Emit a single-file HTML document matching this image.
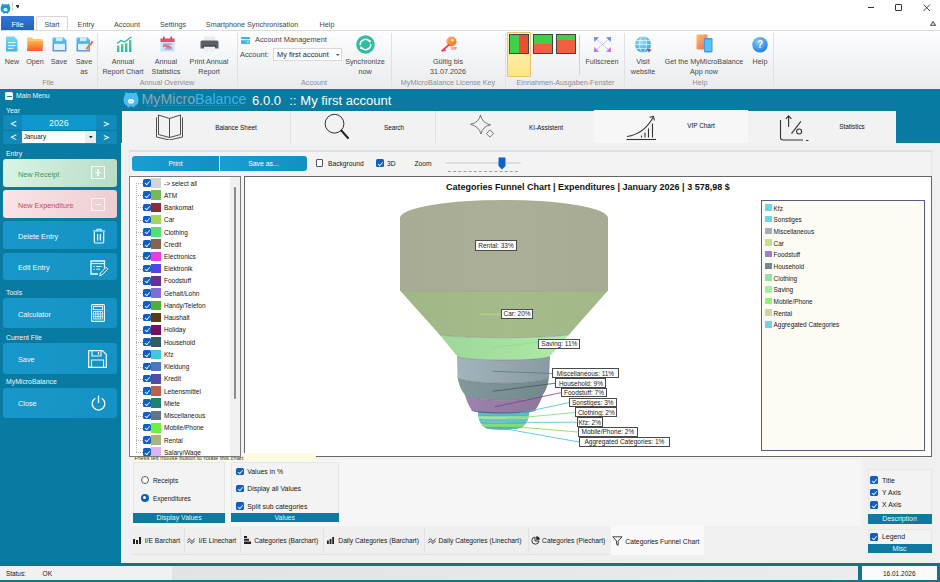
<!DOCTYPE html>
<html><head><meta charset="utf-8">
<style>
*{box-sizing:border-box}
html,body{margin:0;padding:0}
body{width:940px;height:582px;overflow:hidden;position:relative;background:#fff;font-family:"Liberation Sans",sans-serif;color:#222}
.a{position:absolute}
.t{position:absolute;white-space:nowrap;line-height:10px;height:10px}
.c{text-align:center}
.rb{font-size:7.2px;color:#474747}
.gl{font-size:7.2px;color:#8d8d8d}
.sl{color:#eef6fa}
.sw{color:#f2f9fc}
.btn{left:3px;width:114px;border-radius:3px}
.bb{background:linear-gradient(100deg,#1898ca,#1592c4)}
.tb{font-size:6.4px;color:#111}
.tx{color:#161616}
.chk{width:7.6px;height:7.6px;border-radius:1.5px;background:#0f5ec4}
.chk::after{content:"";position:absolute;left:2.6px;top:1.4px;width:1.9px;height:3.6px;border-right:0.85px solid #e8f0ff;border-bottom:0.85px solid #e8f0ff;transform:rotate(40deg)}
.sep{position:absolute;width:1px;background:#dfe2e5}
</style></head><body>
<!-- ===== TITLE BAR ===== -->
<div class="a" style="left:0;top:0;width:940px;height:31px;background:#fff"></div>
<!-- app icon -->
<svg class="a" style="left:0;top:3px" width="11" height="11" viewBox="0 0 16 17">
<path d="M2.2 3.2 Q1.5 0.8 3.5 1.2 L5 2.2 Q8 1.5 11 2.2 L12.5 1.2 Q14.5 0.8 13.8 3.2 Q15.8 6 15.5 9.5 Q15 14 11.5 15 L11.5 16.5 L9.8 16.5 L9.8 15.4 Q8 15.6 6.2 15.4 L6.2 16.5 L4.5 16.5 L4.5 15 Q1 14 0.5 9.5 Q0.2 6 2.2 3.2Z" fill="#1f98cf"/>
<ellipse cx="8" cy="10.3" rx="3.2" ry="2.5" fill="#fff"/>
<circle cx="7" cy="10.3" r="0.7" fill="#1f98cf"/><circle cx="9" cy="10.3" r="0.7" fill="#1f98cf"/>
</svg>
<div class="a" style="left:12px;top:2px;width:1px;height:9px;background:#ccc"></div>
<div class="a" style="left:16px;top:5px;width:3px;height:1px;background:#333"></div>
<svg class="a" style="left:16px;top:6px" width="4" height="4"><path d="M0 0 L3.5 0 L1.75 2.5Z" fill="#333"/></svg>
<!-- window controls -->
<div class="a" style="left:868px;top:7px;width:6px;height:1px;background:#333"></div>
<div class="a" style="left:895px;top:4px;width:7px;height:7px;border:1px solid #333;border-radius:1px"></div>
<svg class="a" style="left:923px;top:4px" width="8" height="8"><path d="M0.5 0.5 L7 7 M7 0.5 L0.5 7" stroke="#333" stroke-width="0.9"/></svg>
<svg class="a" style="left:929px;top:20px" width="9" height="7" viewBox="0 0 9 7"><path d="M4 1.6 L1.6 5.3 L6.6 5.3 Z" fill="none" stroke="#6a6a6a" stroke-width="1.15" stroke-linejoin="round"/></svg>
<!-- tabs -->
<div class="a" style="left:1px;top:16px;width:33px;height:15px;background:linear-gradient(#3377d6,#2160c0);border-radius:1px"></div>
<div class="t c" style="left:1px;top:20px;width:33px;font-size:7.6px;color:#fff">File</div>
<div class="a" style="left:36px;top:16px;width:32px;height:16px;background:#fdfdfd;border:1px solid #d6d6d6;border-bottom:none;border-radius:2px 2px 0 0"></div>
<div class="t c rb" style="left:36px;top:20px;width:32px">Start</div>
<div class="t c rb" style="left:66px;top:20px;width:40px">Entry</div>
<div class="t c rb" style="left:102px;top:20px;width:50px">Account</div>
<div class="t c rb" style="left:148px;top:20px;width:50px">Settings</div>
<div class="t c rb" style="left:202px;top:20px;width:100px">Smartphone Synchronisation</div>
<div class="t c rb" style="left:307px;top:20px;width:40px">Help</div>
<!-- ===== RIBBON ===== -->
<div class="a" style="left:0;top:30px;width:940px;height:1px;background:#dadcdf"></div>
<div class="a" style="left:0;top:31px;width:940px;height:58px;background:linear-gradient(#fdfdfe,#e9ebee)"></div>
<div class="sep" style="left:97px;top:33px;height:54px"></div>
<div class="sep" style="left:237px;top:33px;height:54px"></div>
<div class="sep" style="left:391px;top:33px;height:54px"></div>
<div class="sep" style="left:505px;top:33px;height:54px"></div>
<div class="sep" style="left:624px;top:33px;height:54px"></div>
<div class="sep" style="left:773px;top:33px;height:54px"></div>
<div id="ribbon"></div>
<!-- File group -->
<svg class="a" style="left:5px;top:36px" width="14" height="16" viewBox="0 0 14 16">
<defs><linearGradient id="gNew" x1="0" y1="0" x2="0" y2="1"><stop offset="0" stop-color="#7dd6f6"/><stop offset="1" stop-color="#3db5ea"/></linearGradient></defs>
<path d="M1 0.5 L9 0.5 L12.5 4 L12.5 15.5 L1 15.5Z" fill="url(#gNew)"/>
<rect x="3" y="6" width="7.5" height="1.1" fill="#e6f8ff"/>
<rect x="3" y="9" width="7.5" height="1.1" fill="#e6f8ff"/>
<rect x="3" y="11.8" width="5.5" height="1.1" fill="#e6f8ff"/>
</svg>
<svg class="a" style="left:26px;top:37px" width="18" height="15" viewBox="0 0 18 15">
<defs><linearGradient id="gOpen" x1="0" y1="0" x2="0" y2="1"><stop offset="0" stop-color="#ffb24a"/><stop offset="1" stop-color="#fb5a24"/></linearGradient></defs>
<path d="M1 1.5 Q1 0.5 2 0.5 L6 0.5 L7.5 2 L15.5 2 Q16.5 2 16.5 3 L16.5 14 L1 14Z" fill="#ffc873"/>
<path d="M2.2 4 L17 4 L16.5 14 L1 14Z" fill="url(#gOpen)"/>
</svg>
<svg class="a" style="left:52px;top:37px" width="15" height="15" viewBox="0 0 15 15">
<defs><linearGradient id="gSave" x1="0" y1="0" x2="0" y2="1"><stop offset="0" stop-color="#52c6ee"/><stop offset="1" stop-color="#5b8de6"/></linearGradient></defs>
<path d="M0.5 1 Q0.5 0.5 1 0.5 L11.5 0.5 L14.5 3.5 L14.5 14 Q14.5 14.5 14 14.5 L1 14.5 Q0.5 14.5 0.5 14Z" fill="url(#gSave)"/>
<rect x="4" y="0.5" width="6.5" height="3.6" fill="#c6eefc"/>
<rect x="2" y="6.8" width="11" height="6.3" fill="#d9f3fd"/>
</svg>
<svg class="a" style="left:76px;top:37px" width="17" height="15" viewBox="0 0 17 15">
<path d="M0.5 1 Q0.5 0.5 1 0.5 L11.5 0.5 L14 3 L14 14 Q14 14.5 13.5 14.5 L1 14.5 Q0.5 14.5 0.5 14Z" fill="url(#gSave)"/>
<rect x="4" y="0.5" width="6.5" height="3.6" fill="#c6eefc"/>
<rect x="2" y="6.8" width="10.5" height="6.3" fill="#d9f3fd"/>
<path d="M9.5 11.5 L14.5 5.5 L16 7 L11 13Z" fill="#f47a3a"/>
<path d="M14.5 5.5 L15.5 4.3 Q16.2 3.8 16.8 4.5 Q17.2 5.2 16.8 5.7 L16 7Z" fill="#e84a6a"/>
</svg>
<div class="t c rb" style="left:-8px;top:57px;width:40px">New</div>
<div class="t c rb" style="left:15px;top:57px;width:40px">Open</div>
<div class="t c rb" style="left:39px;top:57px;width:40px">Save</div>
<div class="t c rb" style="left:64px;top:57px;width:40px">Save</div>
<div class="t c rb" style="left:64px;top:67px;width:40px">as</div>
<div class="t c gl" style="left:18px;top:78px;width:60px">File</div>
<!-- Annual overview -->
<svg class="a" style="left:116px;top:36px" width="17" height="16" viewBox="0 0 17 16">
<defs><linearGradient id="gBar" x1="0" y1="0" x2="0" y2="1"><stop offset="0" stop-color="#56d38a"/><stop offset="1" stop-color="#1fb8a8"/></linearGradient></defs>
<path d="M1 7.5 L5 4.5 L8.5 6 L15.5 0.8" stroke="#2fb3b0" stroke-width="1.2" fill="none"/>
<rect x="1" y="9.5" width="2.4" height="6.5" fill="url(#gBar)"/>
<rect x="5" y="8" width="2.4" height="8" fill="url(#gBar)"/>
<rect x="9" y="7" width="2.4" height="9" fill="url(#gBar)"/>
<rect x="13" y="4" width="2.4" height="12" fill="url(#gBar)"/>
</svg>
<svg class="a" style="left:160px;top:36px" width="15" height="16" viewBox="0 0 15 16">
<rect x="0.5" y="2.5" width="14" height="13" fill="#bfe7fb"/>
<rect x="0.5" y="2.5" width="14" height="3.5" fill="#ef4e5c"/>
<rect x="3" y="0.5" width="1.6" height="3" fill="#6a6aa8"/><rect x="10.4" y="0.5" width="1.6" height="3" fill="#6a6aa8"/>
<path d="M3 8 H12 M3 10.5 H11 M5 13 H12" stroke="#f2677a" stroke-width="0.9"/>
<path d="M3 9.3 H9 M6 11.8 H12" stroke="#4e7bd8" stroke-width="0.9"/>
</svg>
<svg class="a" style="left:200px;top:36px" width="19" height="16" viewBox="0 0 19 16">
<rect x="4" y="0.5" width="11" height="5" fill="#e9ecef"/>
<path d="M0.5 6 Q0.5 4.5 2 4.5 L17 4.5 Q18.5 4.5 18.5 6 L18.5 12.5 L0.5 12.5Z" fill="#5a6068"/>
<rect x="4" y="10.5" width="11" height="5" fill="#eef0f2"/>
<rect x="3" y="9.5" width="13" height="1" fill="#3a3e44"/>
</svg>
<div class="t c rb" style="left:103px;top:57px;width:40px">Annual</div>
<div class="t c rb" style="left:98px;top:67px;width:50px">Report Chart</div>
<div class="t c rb" style="left:146px;top:57px;width:40px">Annual</div>
<div class="t c rb" style="left:146px;top:67px;width:40px">Statistics</div>
<div class="t c rb" style="left:184px;top:57px;width:50px">Print Annual</div>
<div class="t c rb" style="left:189px;top:67px;width:40px">Report</div>
<div class="t c gl" style="left:127px;top:78px;width:80px">Annual Overview</div>
<!-- Account -->
<svg class="a" style="left:241px;top:37px" width="9" height="7" viewBox="0 0 9 7">
<rect x="0" y="0" width="9" height="7" rx="0.8" fill="#3fb6ea"/>
<rect x="0" y="2" width="9" height="1.2" fill="#e8f8ff"/>
<rect x="5.5" y="4.5" width="2.5" height="1" fill="#e8f8ff"/>
</svg>
<div class="t rb" style="left:255px;top:35px;font-size:7.4px">Account Management</div>
<div class="t rb" style="left:240px;top:50px;font-size:7.4px">Account:</div>
<div class="a" style="left:273px;top:48px;width:69px;height:13px;background:#fff;border:1px solid #d9d9d9"></div>
<div class="t rb" style="left:277px;top:50px;font-size:7.4px;color:#222">My first account</div>
<svg class="a" style="left:336px;top:54px" width="4" height="3"><path d="M0 0 L3.5 0 L1.75 2Z" fill="#555"/></svg>
<svg class="a" style="left:355px;top:35px" width="21" height="19" viewBox="0 0 21 19">
<circle cx="10.5" cy="9.5" r="9.3" fill="#2ebf9f"/>
<path d="M5.3 10 A5.2 5.2 0 0 1 14.6 6.4" stroke="#fff" stroke-width="1.5" fill="none"/>
<path d="M12.6 5.2 L15.9 5.0 L15.3 8.3Z" fill="#fff"/>
<path d="M15.7 9 A5.2 5.2 0 0 1 6.4 12.6" stroke="#fff" stroke-width="1.5" fill="none"/>
<path d="M8.4 13.8 L5.1 14.0 L5.7 10.7Z" fill="#fff"/>
</svg>
<div class="t c rb" style="left:340px;top:57px;width:50px">Synchronize</div>
<div class="t c rb" style="left:345px;top:67px;width:40px">now</div>
<div class="t c gl" style="left:284px;top:78px;width:60px">Account</div>
<!-- License -->
<svg class="a" style="left:440px;top:36px" width="18" height="16" viewBox="0 0 18 16">
<defs><linearGradient id="gKey" x1="0" y1="0" x2="1" y2="1"><stop offset="0" stop-color="#ffb057"/><stop offset="1" stop-color="#ff6a2a"/></linearGradient></defs>
<circle cx="11.5" cy="5.5" r="5" fill="url(#gKey)"/>
<circle cx="12.5" cy="4.2" r="1.4" fill="#ffe8c8"/>
<path d="M8.5 8 L1 14.5 L2.5 16 L4 14.5 L5 15.5 L6 14.5 L5 13.5 L10 9Z" fill="#ef3a4a"/>
<text x="11" y="13.6" font-size="3.6" fill="#e85a3a" font-family="Liberation Sans" font-weight="bold">VIP</text>
</svg>
<div class="t c rb" style="left:418px;top:57px;width:60px">Gültig bis</div>
<div class="t c rb" style="left:418px;top:67px;width:60px">31.07.2026</div>
<div class="t c gl" style="left:398px;top:78px;width:100px">MyMicroBalance License Key</div>
<!-- Einnahmen -->
<div class="a" style="left:507px;top:32px;width:24px;height:45px;background:linear-gradient(#fff3b8,#fde58a);border:1px solid #e3c46a;border-radius:1px"></div>
<div class="a" style="left:509px;top:34px;width:20px;height:20px;border:1px solid #444;background:linear-gradient(90deg,#3fd04a 0,#3fd04a 50%,#e8502e 50%)"></div>
<div class="a" style="left:533px;top:34px;width:20px;height:20px;border:1px solid #444;background:linear-gradient(#3fd04a 0,#3fd04a 50%,#f06040 50%)"></div>
<div class="a" style="left:556px;top:34px;width:20px;height:20px;border:1px solid #444;background:linear-gradient(#3fd04a 0,#3fd04a 30%,#f06040 30%)"></div>
<div class="sep" style="left:579px;top:35px;height:40px;background:#cfd3d7"></div>
<div class="t c gl" style="left:515.5px;top:78px;width:100px">Einnahmen-Ausgaben-Fenster</div>
<!-- Fullscreen -->
<svg class="a" style="left:593px;top:36px" width="19" height="17" viewBox="0 0 19 17">
<path d="M3 3 L16 14 M16 3 L3 14" stroke="#b9a2e8" stroke-width="1" stroke-dasharray="1.4 1"/>
<path d="M1 1 L6 1.3 L1.3 6Z" fill="#6b8ef0"/>
<path d="M18 1 L13 1.3 L17.7 6Z" fill="#6b8ef0"/>
<path d="M1 16 L6 15.7 L1.3 11Z" fill="#c070e8"/>
<path d="M18 16 L13 15.7 L17.7 11Z" fill="#c070e8"/>
</svg>
<div class="t c rb" style="left:577px;top:57px;width:50px">Fullscreen</div>
<!-- Help group -->
<svg class="a" style="left:634px;top:36px" width="19" height="17" viewBox="0 0 19 17">
<defs><radialGradient id="gGlobe" cx="0.4" cy="0.35" r="0.7"><stop offset="0" stop-color="#9fe0f8"/><stop offset="1" stop-color="#2aa0e0"/></radialGradient></defs>
<circle cx="9" cy="8.5" r="8" fill="url(#gGlobe)"/>
<ellipse cx="9" cy="8.5" rx="3.5" ry="8" fill="none" stroke="#e8f8ff" stroke-width="0.7"/>
<path d="M1 8.5 H17 M2.2 4.5 H15.8 M2.2 12.5 H15.8" stroke="#e8f8ff" stroke-width="0.7"/>
<path d="M13 12 L18 14 L16 15 L15 17Z" fill="#7a4ad8"/>
</svg>
<div class="t c rb" style="left:623px;top:57px;width:40px">Visit</div>
<div class="t c rb" style="left:618px;top:67px;width:50px">website</div>
<svg class="a" style="left:696px;top:34px" width="17" height="19" viewBox="0 0 17 19">
<defs><linearGradient id="gTab" x1="0" y1="0" x2="1" y2="1"><stop offset="0" stop-color="#ffc066"/><stop offset="1" stop-color="#f0605a"/></linearGradient></defs>
<rect x="0.5" y="0.5" width="11" height="15" rx="1" fill="url(#gTab)"/>
<rect x="8" y="4" width="8.5" height="14.5" rx="1.2" fill="#3a9ee0"/>
<rect x="9" y="5.5" width="6.5" height="11.5" fill="#5cc0f0"/>
</svg>
<div class="t c rb" style="left:654px;top:57px;width:100px">Get the MyMicroBalance</div>
<div class="t c rb" style="left:674px;top:67px;width:60px">App now</div>
<svg class="a" style="left:752px;top:37px" width="16" height="16" viewBox="0 0 16 16">
<defs><radialGradient id="gHelp" cx="0.4" cy="0.3" r="0.75"><stop offset="0" stop-color="#7fd0ff"/><stop offset="1" stop-color="#1a78e0"/></radialGradient></defs>
<circle cx="8" cy="7.8" r="7.7" fill="url(#gHelp)"/>
<text x="8" y="11.3" font-size="10" fill="#fff" text-anchor="middle" font-family="Liberation Sans" font-weight="bold">?</text>
</svg>
<div class="t c rb" style="left:740px;top:57px;width:40px">Help</div>
<div class="t c gl" style="left:670px;top:78px;width:60px">Help</div>

<!-- ===== TEAL FRAME ===== -->
<div class="a" style="left:0;top:89px;width:940px;height:477px;background:#087ba2"></div>
<div id="sidebar"></div>
<!-- ===== SIDEBAR ===== -->
<div class="a" style="left:5px;top:92px;width:8px;height:8px;background:#fff;border-radius:1.5px"></div>
<div class="a" style="left:6.5px;top:95.5px;width:5px;height:1.2px;background:#0e79a1"></div>
<div class="t sl" style="left:16px;top:90.5px;font-size:6.8px">Main Menu</div>
<div class="t sl" style="left:6px;top:105.6px;font-size:6.9px">Year</div>
<div class="a" style="left:3px;top:115px;width:114px;height:15px;background:#1289bb;border-radius:2px"></div>
<div class="a" style="left:22px;top:115px;width:73.6px;height:15px;background:#0e98cd"></div>


<div class="t c" style="left:22px;top:117.5px;width:73.6px;font-size:8.8px;color:#eef8fc">2026</div>
<div class="a" style="left:3px;top:131px;width:114px;height:12.5px;background:#1289bb;border-radius:2px"></div>
<div class="a" style="left:22px;top:130.6px;width:73.6px;height:12.6px;background:#fff"></div>
<div class="a" style="left:85.2px;top:130.6px;width:10.4px;height:12.6px;background:#ececec"></div>
<svg class="a" style="left:88.5px;top:136px" width="4" height="3"><path d="M0 0 L3.6 0 L1.8 2.2Z" fill="#111"/></svg>


<div class="t" style="left:23.7px;top:132px;font-size:6.3px;color:#111">January</div>
<svg class="a" style="left:0;top:110px" width="120" height="34"><path d="M16.3 11.2 L11.3 13.7 L16.3 16.2 M103.8 11.9 L108.6 14 L103.8 16.1 M16.3 24.8 L11.3 27.2 L16.3 29.6 M103.8 25.4 L108.6 27.5 L103.8 29.6" stroke="#e8f6fc" stroke-width="1.05" fill="none"/></svg>
<div class="t sl" style="left:6px;top:148.8px;font-size:6.9px">Entry</div>
<div class="a btn" style="top:159px;height:28px;background:linear-gradient(100deg,#d8f4e6,#b9dcc3)"></div>
<div class="t" style="left:18px;top:169.7px;font-size:7.3px;color:#3a9858">New Receipt</div>
<div class="a" style="left:91.3px;top:166.3px;width:13.3px;height:13px;border:1.3px solid #f4fbf6"></div>
<div class="a" style="left:94.5px;top:172.1px;width:6.9px;height:1.3px;background:#f4fbf6"></div>
<div class="a" style="left:97.3px;top:169.3px;width:1.3px;height:6.9px;background:#f4fbf6"></div>
<div class="a btn" style="top:190.4px;height:27.4px;background:linear-gradient(100deg,#fbe3e6,#ecced2)"></div>
<div class="t" style="left:18px;top:201.2px;font-size:7.3px;color:#c84e50">New Expenditure</div>
<div class="a" style="left:91.3px;top:197.8px;width:13.3px;height:13px;border:1.3px solid #fdf3f4"></div>
<div class="a" style="left:94.5px;top:203.6px;width:6.9px;height:1.3px;background:#fdf3f4"></div>
<div class="a btn bb" style="top:221.4px;height:27.6px"></div>
<div class="t sw" style="left:18px;top:231.5px;font-size:7.3px">Delete Entry</div>
<svg class="a" style="left:92px;top:227.5px" width="14" height="16" viewBox="0 0 14 16">
<path d="M1 3 H13 M5 3 V1.2 H9 V3" stroke="#f2f9fc" stroke-width="1.1" fill="none"/>
<path d="M2.3 4 V13.8 Q2.3 15 3.5 15 H10.5 Q11.7 15 11.7 13.8 V4" stroke="#f2f9fc" stroke-width="1.2" fill="none"/>
<path d="M5.6 6 V12.5 M8.4 6 V12.5" stroke="#f2f9fc" stroke-width="1.3"/>
</svg>
<div class="a btn bb" style="top:252.6px;height:27.7px"></div>
<div class="t sw" style="left:18px;top:263px;font-size:7.3px">Edit Entry</div>
<svg class="a" style="left:90px;top:259.5px" width="19" height="17" viewBox="0 0 19 17">
<path d="M14.5 8 V1 H1 V14 H8" stroke="#f2f9fc" stroke-width="1.3" fill="none"/>
<path d="M1 3.6 H14.5" stroke="#f2f9fc" stroke-width="1"/>
<path d="M3.5 6.5 H4.8 M6.2 6.5 H11.5 M3.5 9.2 H4.8 M6.2 9.2 H10" stroke="#f2f9fc" stroke-width="1"/>
<path d="M9.8 15.8 L10.3 13 L16 7.3 L17.8 9.1 L12.1 14.8Z" stroke="#f2f9fc" stroke-width="1" fill="none"/>
</svg>
<div class="t sl" style="left:6px;top:287.8px;font-size:6.9px">Tools</div>
<div class="a btn bb" style="top:297.5px;height:30.5px"></div>
<div class="t sw" style="left:18px;top:310px;font-size:7.3px">Calculator</div>
<svg class="a" style="left:91px;top:304px" width="14" height="18" viewBox="0 0 14 18">
<rect x="0.6" y="0.6" width="12.8" height="16.8" rx="1" stroke="#f2f9fc" stroke-width="1.1" fill="none"/>
<rect x="2.5" y="2.5" width="9" height="3.2" stroke="#f2f9fc" stroke-width="0.9" fill="none"/>
<path d="M2.5 7.5 H11.5 M2.5 10 H11.5 M2.5 12.5 H11.5 M2.5 15 H11.5 M2.5 7.5 V15 M4.75 7.5 V15 M7 7.5 V15 M9.25 7.5 V15 M11.5 7.5 V15" stroke="#f2f9fc" stroke-width="0.8"/>
</svg>
<div class="t sl" style="left:6px;top:333.3px;font-size:6.86px">Current File</div>
<div class="a btn bb" style="top:343px;height:30.7px"></div>
<div class="t sw" style="left:18px;top:355.3px;font-size:7.3px">Save</div>
<svg class="a" style="left:88px;top:349.5px" width="19" height="18" viewBox="0 0 19 18">
<path d="M0.7 0.7 H14.5 L18.3 4.5 V17.3 H0.7Z" stroke="#f2f9fc" stroke-width="1.2" fill="none"/>
<path d="M4 0.7 V6 H13 V0.7 M10.5 2 V4.5" stroke="#f2f9fc" stroke-width="1.1" fill="none"/>
<path d="M3.5 17.3 V10 H15.5 V17.3" stroke="#f2f9fc" stroke-width="1.1" fill="none"/>
</svg>
<div class="t sl" style="left:6px;top:376.5px;font-size:6.86px">MyMicroBalance</div>
<div class="a btn bb" style="top:387.5px;height:30px"></div>
<div class="t sw" style="left:18px;top:399.3px;font-size:7.3px">Close</div>
<svg class="a" style="left:89.5px;top:394.5px" width="17" height="16" viewBox="0 0 17 16">
<path d="M5.3 3.3 A6.3 6.3 0 1 0 11.7 3.3" stroke="#f2f9fc" stroke-width="1.3" fill="none"/>
<path d="M8.5 0.5 V8" stroke="#f2f9fc" stroke-width="1.3"/>
</svg>

<div id="content"></div>
<!-- ===== LOGO ROW ===== -->
<svg class="a" style="left:122.5px;top:91px" width="16" height="17" viewBox="0 0 16 17">
<path d="M2.2 3.2 Q1.5 0.8 3.5 1.2 L5 2.2 Q8 1.5 11 2.2 L12.5 1.2 Q14.5 0.8 13.8 3.2 Q15.8 6 15.5 9.5 Q15 14 11.5 15 L11.5 16.5 L9.8 16.5 L9.8 15.4 Q8 15.6 6.2 15.4 L6.2 16.5 L4.5 16.5 L4.5 15 Q1 14 0.5 9.5 Q0.2 6 2.2 3.2Z" fill="#4dbbee"/>
<ellipse cx="8" cy="10.3" rx="3" ry="2.3" fill="#fff"/>
<circle cx="7" cy="10.3" r="0.65" fill="#4dbbee"/><circle cx="9" cy="10.3" r="0.65" fill="#4dbbee"/>
</svg>
<div class="t" style="left:141.5px;top:91px;height:16px;line-height:16px;font-size:14.2px;letter-spacing:0px"><span style="color:#8aa6b4">MyMicro</span><span style="color:#40b3e6">Balance</span></div>
<div class="a" style="left:147px;top:105px;width:92px;height:0;border-top:1px dotted #4f90b0"></div>
<div class="t" style="left:252px;top:93px;height:16px;line-height:16px;font-size:13.1px;color:#fff">6.0.0</div>
<div class="t" style="left:289.2px;top:93px;height:16px;line-height:16px;font-size:13.1px;color:#fff">::</div>
<div class="t" style="left:300.3px;top:93px;height:16px;line-height:16px;font-size:13px;color:#fff">My first account</div>
<!-- ===== TABS ===== -->
<div class="a" style="left:121.7px;top:111px;width:774.5px;height:32px;background:#f2f2f2;border-top:1px solid #fbfbfb;border-left:1px solid #fbfbfb"></div>
<div class="a" style="left:593.5px;top:109.8px;width:154.5px;height:33.5px;background:#f7f7f7"></div>
<div class="a" style="left:290px;top:111px;width:1px;height:32px;background:#e2e2e2"></div>
<div class="a" style="left:435px;top:111px;width:1px;height:32px;background:#e2e2e2"></div>
<div class="t c tb" style="left:196px;top:122.5px;width:80px">Balance Sheet</div>
<div class="t c tb" style="left:354px;top:122.5px;width:80px">Search</div>
<div class="t c tb" style="left:506px;top:122.8px;width:80px">KI-Assistent</div>
<div class="t c tb" style="left:661px;top:121px;width:80px">VIP Chart</div>
<div class="t c tb" style="left:812px;top:122px;width:80px">Statistics</div>
<!-- book -->
<svg class="a" style="left:154px;top:113px" width="30" height="27" viewBox="0 0 30 27">
<path d="M15.5 5.5 L4.5 2 V21.5 L15.5 24.5 L26.5 21.5 V2 L15.5 5.5 V24.5" stroke="#3a3a3a" stroke-width="0.9" fill="none" stroke-linejoin="round"/>
<path d="M2.5 4.5 V24 L15.5 27 L28.5 24 V4.5" stroke="#3a3a3a" stroke-width="0.9" fill="none" stroke-linejoin="round"/>
</svg>
<!-- search -->
<svg class="a" style="left:322px;top:113px" width="29" height="27" viewBox="0 0 29 27">
<circle cx="12.5" cy="10.7" r="9.4" stroke="#333" stroke-width="1" fill="none"/>
<path d="M19.3 17.5 L26 25" stroke="#222" stroke-width="2" stroke-linecap="round"/>
</svg>
<!-- KI sparkle -->
<svg class="a" style="left:468px;top:112px" width="30" height="30" viewBox="0 0 30 30">
<path d="M12.5 3 Q14 11 22.5 12.8 Q14.5 14.5 13 22 Q11 14.5 2.5 12.3 Q11 10.5 12.5 3Z" stroke="#555" stroke-width="0.8" fill="none"/>
<path d="M22 17.8 L25.6 21.6 L22 25.2 L18.4 21.6Z" stroke="#555" stroke-width="0.8" fill="none"/>
</svg>
<!-- VIP chart -->
<svg class="a" style="left:626px;top:115px" width="31" height="26" viewBox="0 0 31 26">
<path d="M0.5 24.5 H30" stroke="#333" stroke-width="1.1"/>
<path d="M1 21.5 Q18 19 27 2.5" stroke="#333" stroke-width="1.1" fill="none"/>
<path d="M23.5 2.2 L27.5 1.5 L28.3 5.5" stroke="#333" stroke-width="1.1" fill="none"/>
<path d="M15.5 22.5 V20.5 M19 22.5 V17.5 M22.5 22.5 V13.5 M26.5 22.5 V8.5" stroke="#333" stroke-width="1.1"/>
</svg>
<!-- statistics -->
<svg class="a" style="left:778.5px;top:114px" width="32" height="28" viewBox="0 0 32 28">
<path d="M1.5 6 V23.5 Q1.5 26 4 26 H24" stroke="#333" stroke-width="1.1" fill="none"/>
<path d="M9.6 13 V2 M6.8 4.8 L9.6 1.8 L12.4 4.8" stroke="#333" stroke-width="1.1" fill="none"/>
<path d="M12.5 19.7 L21.9 7.4" stroke="#333" stroke-width="1.1"/>
<circle cx="20.1" cy="17.5" r="2.5" stroke="#333" stroke-width="1.1" fill="none"/>
<path d="M27 26.5 H29.5" stroke="#333" stroke-width="1"/>
</svg>
<!-- ===== CONTENT PANEL ===== -->
<div class="a" style="left:121px;top:143px;width:819px;height:420px;background:#f0f0f0"></div>
<div class="a" style="left:121px;top:143px;width:1.2px;height:420px;background:#fafafa"></div>
<div class="a" style="left:129.3px;top:150px;width:802.5px;height:308px;background:#f3f3f3;border-top:2px solid #d9e1e8;border-left:1px solid #e4e8eb;border-right:1px solid #e4e8eb"></div>
<!-- print / save -->
<div class="a" style="left:132px;top:156px;width:86.8px;height:15px;background:linear-gradient(90deg,#1a9dd2,#1390c4);border-radius:3px 0 0 3px"></div>
<div class="a" style="left:220.3px;top:156px;width:87px;height:15px;background:linear-gradient(90deg,#1a9dd2,#1390c4);border-radius:0 3px 3px 0"></div>
<div class="t c" style="left:132px;top:158.5px;width:87px;font-size:6.9px;color:#fff">Print</div>
<div class="t c" style="left:220px;top:158.5px;width:87px;font-size:6.9px;color:#fff">Save as...</div>
<div class="a" style="left:316px;top:159.4px;width:7.4px;height:7.4px;border:1px solid #555;background:#fff;border-radius:1px"></div>
<div class="t tx" style="left:328px;top:158.6px;font-size:6.7px">Background</div>
<div class="a chk" style="left:376px;top:159.2px"></div>
<div class="t tx" style="left:387px;top:158.6px;font-size:6.7px">3D</div>
<div class="t tx" style="left:414.5px;top:158.8px;font-size:6.7px">Zoom</div>
<div class="a" style="left:444.5px;top:162px;width:76.5px;height:2.2px;background:#dedede;border-radius:1px"></div>
<div class="a" style="left:448px;top:170.5px;width:70px;height:0;border-top:1.3px dashed #a0a0a0"></div>
<svg class="a" style="left:498px;top:157px" width="8" height="13" viewBox="0 0 8 13"><path d="M0.5 0.5 H7.5 V9 L4 12.5 L0.5 9Z" fill="#0f63c7"/></svg>

<div class="a" style="left:133.5px;top:453.2px;width:182px;height:8.3px;background:#fdfbe0;z-index:2"></div>
<div class="t" style="left:134.5px;top:455.2px;font-size:5.8px;color:#333;line-height:7px;height:7px;z-index:2">Press left mouse button to rotate this chart</div>
<div class="a" style="left:129.4px;top:176.4px;width:111.5px;height:281px;background:#fff;border:1px solid #7a7a7a;overflow:hidden;z-index:3">
<div class="a" style="left:5.6px;top:5.6px;width:0;height:269.3px;border-left:1px dotted #b4b4b4"></div>
<div class="a" style="left:5.6px;top:5.6px;width:7px;height:0;border-top:1px dotted #b4b4b4"></div>
<div class="a chk" style="left:12.9px;top:1.7px"></div>
<div class="a" style="left:20.6px;top:0.8px;width:10px;height:9.6px;background:#d4d4d4"></div>
<div class="t tx" style="left:33.6px;top:1.2px;font-size:6.5px">-&gt; select all</div>
<div class="a" style="left:5.6px;top:17.8px;width:7px;height:0;border-top:1px dotted #b4b4b4"></div>
<div class="a chk" style="left:12.9px;top:13.9px"></div>
<div class="a" style="left:20.6px;top:13.0px;width:10px;height:9.6px;background:#78b858"></div>
<div class="t tx" style="left:33.6px;top:13.4px;font-size:6.5px">ATM</div>
<div class="a" style="left:5.6px;top:30.1px;width:7px;height:0;border-top:1px dotted #b4b4b4"></div>
<div class="a chk" style="left:12.9px;top:26.2px"></div>
<div class="a" style="left:20.6px;top:25.3px;width:10px;height:9.6px;background:#8a2c3c"></div>
<div class="t tx" style="left:33.6px;top:25.7px;font-size:6.5px">Bankomat</div>
<div class="a" style="left:5.6px;top:42.3px;width:7px;height:0;border-top:1px dotted #b4b4b4"></div>
<div class="a chk" style="left:12.9px;top:38.4px"></div>
<div class="a" style="left:20.6px;top:37.5px;width:10px;height:9.6px;background:#a6d35c"></div>
<div class="t tx" style="left:33.6px;top:37.9px;font-size:6.5px">Car</div>
<div class="a" style="left:5.6px;top:54.6px;width:7px;height:0;border-top:1px dotted #b4b4b4"></div>
<div class="a chk" style="left:12.9px;top:50.7px"></div>
<div class="a" style="left:20.6px;top:49.8px;width:10px;height:9.6px;background:#52e06e"></div>
<div class="t tx" style="left:33.6px;top:50.2px;font-size:6.5px">Clothing</div>
<div class="a" style="left:5.6px;top:66.8px;width:7px;height:0;border-top:1px dotted #b4b4b4"></div>
<div class="a chk" style="left:12.9px;top:62.9px"></div>
<div class="a" style="left:20.6px;top:62.0px;width:10px;height:9.6px;background:#8a6252"></div>
<div class="t tx" style="left:33.6px;top:62.4px;font-size:6.5px">Credit</div>
<div class="a" style="left:5.6px;top:79.0px;width:7px;height:0;border-top:1px dotted #b4b4b4"></div>
<div class="a chk" style="left:12.9px;top:75.1px"></div>
<div class="a" style="left:20.6px;top:74.2px;width:10px;height:9.6px;background:#e23ee6"></div>
<div class="t tx" style="left:33.6px;top:74.6px;font-size:6.5px">Electronics</div>
<div class="a" style="left:5.6px;top:91.3px;width:7px;height:0;border-top:1px dotted #b4b4b4"></div>
<div class="a chk" style="left:12.9px;top:87.4px"></div>
<div class="a" style="left:20.6px;top:86.5px;width:10px;height:9.6px;background:#4f44e4"></div>
<div class="t tx" style="left:33.6px;top:86.9px;font-size:6.5px">Elektronik</div>
<div class="a" style="left:5.6px;top:103.5px;width:7px;height:0;border-top:1px dotted #b4b4b4"></div>
<div class="a chk" style="left:12.9px;top:99.6px"></div>
<div class="a" style="left:20.6px;top:98.7px;width:10px;height:9.6px;background:#6a2f94"></div>
<div class="t tx" style="left:33.6px;top:99.1px;font-size:6.5px">Foodstuff</div>
<div class="a" style="left:5.6px;top:115.8px;width:7px;height:0;border-top:1px dotted #b4b4b4"></div>
<div class="a chk" style="left:12.9px;top:111.9px"></div>
<div class="a" style="left:20.6px;top:111.0px;width:10px;height:9.6px;background:#7e6ed4"></div>
<div class="t tx" style="left:33.6px;top:111.4px;font-size:6.5px">Gehalt/Lohn</div>
<div class="a" style="left:5.6px;top:128.0px;width:7px;height:0;border-top:1px dotted #b4b4b4"></div>
<div class="a chk" style="left:12.9px;top:124.1px"></div>
<div class="a" style="left:20.6px;top:123.2px;width:10px;height:9.6px;background:#4fb02e"></div>
<div class="t tx" style="left:33.6px;top:123.6px;font-size:6.5px">Handy/Telefon</div>
<div class="a" style="left:5.6px;top:140.2px;width:7px;height:0;border-top:1px dotted #b4b4b4"></div>
<div class="a chk" style="left:12.9px;top:136.3px"></div>
<div class="a" style="left:20.6px;top:135.4px;width:10px;height:9.6px;background:#5a3c12"></div>
<div class="t tx" style="left:33.6px;top:135.8px;font-size:6.5px">Haushalt</div>
<div class="a" style="left:5.6px;top:152.5px;width:7px;height:0;border-top:1px dotted #b4b4b4"></div>
<div class="a chk" style="left:12.9px;top:148.6px"></div>
<div class="a" style="left:20.6px;top:147.7px;width:10px;height:9.6px;background:#78105e"></div>
<div class="t tx" style="left:33.6px;top:148.1px;font-size:6.5px">Holiday</div>
<div class="a" style="left:5.6px;top:164.7px;width:7px;height:0;border-top:1px dotted #b4b4b4"></div>
<div class="a chk" style="left:12.9px;top:160.8px"></div>
<div class="a" style="left:20.6px;top:159.9px;width:10px;height:9.6px;background:#2f5e62"></div>
<div class="t tx" style="left:33.6px;top:160.3px;font-size:6.5px">Household</div>
<div class="a" style="left:5.6px;top:177.0px;width:7px;height:0;border-top:1px dotted #b4b4b4"></div>
<div class="a chk" style="left:12.9px;top:173.1px"></div>
<div class="a" style="left:20.6px;top:172.2px;width:10px;height:9.6px;background:#3ec8dc"></div>
<div class="t tx" style="left:33.6px;top:172.6px;font-size:6.5px">Kfz</div>
<div class="a" style="left:5.6px;top:189.2px;width:7px;height:0;border-top:1px dotted #b4b4b4"></div>
<div class="a chk" style="left:12.9px;top:185.3px"></div>
<div class="a" style="left:20.6px;top:184.4px;width:10px;height:9.6px;background:#4e76c2"></div>
<div class="t tx" style="left:33.6px;top:184.8px;font-size:6.5px">Kleidung</div>
<div class="a" style="left:5.6px;top:201.4px;width:7px;height:0;border-top:1px dotted #b4b4b4"></div>
<div class="a chk" style="left:12.9px;top:197.5px"></div>
<div class="a" style="left:20.6px;top:196.6px;width:10px;height:9.6px;background:#4e4ea4"></div>
<div class="t tx" style="left:33.6px;top:197.0px;font-size:6.5px">Kredit</div>
<div class="a" style="left:5.6px;top:213.7px;width:7px;height:0;border-top:1px dotted #b4b4b4"></div>
<div class="a chk" style="left:12.9px;top:209.8px"></div>
<div class="a" style="left:20.6px;top:208.9px;width:10px;height:9.6px;background:#c25c52"></div>
<div class="t tx" style="left:33.6px;top:209.3px;font-size:6.5px">Lebensmittel</div>
<div class="a" style="left:5.6px;top:225.9px;width:7px;height:0;border-top:1px dotted #b4b4b4"></div>
<div class="a chk" style="left:12.9px;top:222.0px"></div>
<div class="a" style="left:20.6px;top:221.1px;width:10px;height:9.6px;background:#1f8270"></div>
<div class="t tx" style="left:33.6px;top:221.5px;font-size:6.5px">Miete</div>
<div class="a" style="left:5.6px;top:238.2px;width:7px;height:0;border-top:1px dotted #b4b4b4"></div>
<div class="a chk" style="left:12.9px;top:234.3px"></div>
<div class="a" style="left:20.6px;top:233.4px;width:10px;height:9.6px;background:#5e7688"></div>
<div class="t tx" style="left:33.6px;top:233.8px;font-size:6.5px">Miscellaneous</div>
<div class="a" style="left:5.6px;top:250.4px;width:7px;height:0;border-top:1px dotted #b4b4b4"></div>
<div class="a chk" style="left:12.9px;top:246.5px"></div>
<div class="a" style="left:20.6px;top:245.6px;width:10px;height:9.6px;background:#6ef03e"></div>
<div class="t tx" style="left:33.6px;top:246.0px;font-size:6.5px">Mobile/Phone</div>
<div class="a" style="left:5.6px;top:262.6px;width:7px;height:0;border-top:1px dotted #b4b4b4"></div>
<div class="a chk" style="left:12.9px;top:258.7px"></div>
<div class="a" style="left:20.6px;top:257.8px;width:10px;height:9.6px;background:#aeb07e"></div>
<div class="t tx" style="left:33.6px;top:258.2px;font-size:6.5px">Rental</div>
<div class="a" style="left:5.6px;top:274.9px;width:7px;height:0;border-top:1px dotted #b4b4b4"></div>
<div class="a chk" style="left:12.9px;top:271.0px"></div>
<div class="a" style="left:20.6px;top:270.1px;width:10px;height:9.6px;background:#e0b2f2"></div>
<div class="t tx" style="left:33.6px;top:270.5px;font-size:6.5px">Salary/Wage</div>
<div class="a" style="left:99.5px;top:0;width:9.8px;height:281px;background:#f0f0f0"></div>
<div class="a" style="left:103.8px;top:10.1px;width:2px;height:211.1px;background:#8c8c8c;border-radius:1px"></div>
</div>
<!-- ===== CHART BOX ===== -->
<div class="a" style="left:244.2px;top:176.4px;width:687.4px;height:281px;background:#fff;border:1px solid #666"></div>
<div class="t" style="left:446px;top:181.5px;font-size:9px;font-weight:bold;color:#111">Categories Funnel Chart | Expenditures | January 2026 | 3 578,98 $</div>
<div id="funnel"></div>
<svg class="a" style="left:0;top:0" width="940" height="582" viewBox="0 0 940 582">
<defs>
<linearGradient id="fg0" x1="0" y1="0" x2="1" y2="0"><stop offset="0" stop-color="#a8ac94"/><stop offset="0.5" stop-color="#abaf97"/><stop offset="1" stop-color="#a7ab93"/></linearGradient>
<linearGradient id="fg1" x1="0" y1="0" x2="1" y2="0"><stop offset="0" stop-color="#a0b687"/><stop offset="0.5" stop-color="#a5bb8b"/><stop offset="1" stop-color="#a2b888"/></linearGradient>
<linearGradient id="fg2" x1="0" y1="0" x2="1" y2="0"><stop offset="0" stop-color="#9ed898"/><stop offset="0.5" stop-color="#a6e09f"/><stop offset="1" stop-color="#b2eca9"/></linearGradient>
<linearGradient id="fg3" x1="0" y1="0" x2="1" y2="0"><stop offset="0" stop-color="#a4b4bc"/><stop offset="0.5" stop-color="#97a7ae"/><stop offset="1" stop-color="#8a9aa1"/></linearGradient>
<linearGradient id="fg4" x1="0" y1="0" x2="1" y2="0"><stop offset="0" stop-color="#83989b"/><stop offset="0.5" stop-color="#7b9093"/><stop offset="1" stop-color="#73888b"/></linearGradient>
<linearGradient id="fg5" x1="0" y1="0" x2="1" y2="0"><stop offset="0" stop-color="#9e83ac"/><stop offset="0.5" stop-color="#967ca4"/><stop offset="1" stop-color="#8d769b"/></linearGradient>
<clipPath id="ringclip"><path d="M478,413.3 C478.5,420 480.5,425 486,428.2 A20,3.2 0 0 0 522.5,426.8 C527,423 528.8,419 529.3,412.2 L529.3,404 L478,404 Z"/></clipPath>
</defs>
<path d="M478,413.3 C478.5,420 480.5,425 486,428.2 A20,3.2 0 0 0 522.5,426.8 C527,423 528.8,419 529.3,412.2 L529.3,404 L478,404 Z" fill="#64b8c6"/>
<g clip-path="url(#ringclip)">
<path d="M470,414.8 A33.5,1.3 0 0 0 537,414.8 L537,418.5 A33.5,1.3 0 0 1 470,418.5 Z" fill="#9ae4a4"/>
<path d="M470,414.8 A33.5,1.3 0 0 0 537,414.8" fill="none" stroke="#3e8c98" stroke-opacity="0.45" stroke-width="0.6"/>
<path d="M470,418.5 A33.5,1.3 0 0 0 537,418.5 L537,422.3 A33.5,1.3 0 0 1 470,422.3 Z" fill="#6cc2d0"/>
<path d="M470,418.5 A33.5,1.3 0 0 0 537,418.5" fill="none" stroke="#3e8c98" stroke-opacity="0.45" stroke-width="0.6"/>
<path d="M470,422.3 A33.5,1.3 0 0 0 537,422.3 L537,426.0 A33.5,1.3 0 0 1 470,426.0 Z" fill="#84dc7c"/>
<path d="M470,422.3 A33.5,1.3 0 0 0 537,422.3" fill="none" stroke="#3e8c98" stroke-opacity="0.45" stroke-width="0.6"/>
<path d="M470,426.0 A33.5,1.3 0 0 0 537,426.0 L537,440 A33.5,3 0 0 1 470,440 Z" fill="#5cb4c0"/>
<path d="M470,426.0 A33.5,1.3 0 0 0 537,426.0" fill="none" stroke="#3e8c98" stroke-opacity="0.45" stroke-width="0.6"/>
</g>
<path d="M400,218 A104.00,18 0 0 1 608,218 L608,290.5 A104.00,0.30 0 0 1 400,290.5 Z" fill="url(#fg0)"/>
<path d="M400,290.5 A104.00,0.30 0 0 0 608,290.5 L569.5,334 A65.25,3.70 0 0 1 439,334 Z" fill="url(#fg1)"/>
<path d="M439,334 A65.25,3.70 0 0 0 569.5,334 L550,356 A46.50,4.00 0 0 1 457,356 Z" fill="url(#fg2)"/>
<path d="M457,356 A46.50,4.00 0 0 0 550,356 L549,376.8 A45.75,6.40 0 0 1 457.5,376.8 Z" fill="url(#fg3)"/>
<path d="M457.5,376.8 A45.75,6.40 0 0 0 549,376.8 Q548.0,388 542.8,395 A38.90,5.40 0 0 1 465,395 Q459,388 457.5,376.8 Z" fill="url(#fg4)"/>
<path d="M465,395 A38.90,5.40 0 0 0 542.8,395 Q539.5,404.5 535.6,409.5 A32.05,3.40 0 0 1 471.5,409.5 Q467.5,404.5 465,395 Z" fill="url(#fg5)"/>
<path d="M400,290.5 A104.00,0.30 0 0 0 608,290.5" fill="none" stroke="#4f5a5a" stroke-opacity="0.4" stroke-width="0.7"/>
<path d="M439,334 A65.25,3.70 0 0 0 569.5,334" fill="none" stroke="#4f5a5a" stroke-opacity="0.4" stroke-width="0.7"/>
<path d="M457,356 A46.50,4.00 0 0 0 550,356" fill="none" stroke="#4f5a5a" stroke-opacity="0.4" stroke-width="0.7"/>
<path d="M457.5,376.8 A45.75,6.40 0 0 0 549,376.8" fill="none" stroke="#4f5a5a" stroke-opacity="0.4" stroke-width="0.7"/>
<path d="M465,395 A38.90,5.40 0 0 0 542.8,395" fill="none" stroke="#4f5a5a" stroke-opacity="0.4" stroke-width="0.7"/>
<path d="M471.5,409.5 A32.05,3.40 0 0 0 535.6,409.5" fill="none" stroke="#4a5a8a" stroke-opacity="0.75" stroke-width="1.1"/>
<path d="M480,314.3 L501,314.3" stroke="#b8e07a" stroke-width="0.8"/>
<path d="M491,348 L538.3,342" stroke="#88e088" stroke-width="0.8"/>
<path d="M492.6,371.2 L552.3,373.5" stroke="#5e7a88" stroke-width="0.8"/>
<path d="M492.6,391.3 L555.4,383.2" stroke="#3e5a60" stroke-width="0.8"/>
<path d="M495,406.8 L560.8,392.7" stroke="#7a3ea0" stroke-width="0.8"/>
<path d="M506,416 L568.9,402.7" stroke="#42c0d4" stroke-width="0.8"/>
<path d="M506,419 L575.3,412.5" stroke="#7ad878" stroke-width="0.8"/>
<path d="M506,422.5 L576.6,422.2" stroke="#42c0d4" stroke-width="0.8"/>
<path d="M506,426 L577.9,432" stroke="#78e040" stroke-width="0.8"/>
<path d="M506,429 L579.1,442" stroke="#42c0d4" stroke-width="0.8"/>
</svg>
<div class="a" style="left:475.4px;top:240.3px;width:41.2px;height:10.6px;background:#fff;border:1px solid #4a4a4a"></div>
<div class="t c" style="left:475.4px;top:241.1px;width:41.2px;font-size:6.5px;color:#222">Rental: 33%</div>
<div class="a" style="left:501.0px;top:309.0px;width:32.1px;height:9.8px;background:#fff;border:1px solid #4a4a4a"></div>
<div class="t c" style="left:501.0px;top:309.4px;width:32.1px;font-size:6.5px;color:#222">Car: 20%</div>
<div class="a" style="left:538.3px;top:338.5px;width:42.1px;height:10.5px;background:#fff;border:1px solid #4a4a4a"></div>
<div class="t c" style="left:538.3px;top:339.3px;width:42.1px;font-size:6.5px;color:#222">Saving: 11%</div>
<div class="a" style="left:552.3px;top:368.4px;width:66.4px;height:9.4px;background:#fff;border:1px solid #4a4a4a"></div>
<div class="t c" style="left:552.3px;top:368.6px;width:66.4px;font-size:6.5px;color:#222">Miscellaneous: 11%</div>
<div class="a" style="left:555.4px;top:378.1px;width:51.1px;height:10.0px;background:#fff;border:1px solid #4a4a4a"></div>
<div class="t c" style="left:555.4px;top:378.6px;width:51.1px;font-size:6.5px;color:#222">Household: 9%</div>
<div class="a" style="left:560.8px;top:387.8px;width:46.4px;height:9.7px;background:#fff;border:1px solid #4a4a4a"></div>
<div class="t c" style="left:560.8px;top:388.2px;width:46.4px;font-size:6.5px;color:#222">Foodstuff: 7%</div>
<div class="a" style="left:568.9px;top:398.0px;width:47.8px;height:9.2px;background:#fff;border:1px solid #4a4a4a"></div>
<div class="t c" style="left:568.9px;top:398.1px;width:47.8px;font-size:6.5px;color:#222">Sonstiges: 3%</div>
<div class="a" style="left:575.3px;top:407.4px;width:42.1px;height:10.0px;background:#fff;border:1px solid #4a4a4a"></div>
<div class="t c" style="left:575.3px;top:407.9px;width:42.1px;font-size:6.5px;color:#222">Clothing: 2%</div>
<div class="a" style="left:576.6px;top:417.2px;width:26.3px;height:9.9px;background:#fff;border:1px solid #4a4a4a"></div>
<div class="t c" style="left:576.6px;top:417.6px;width:26.3px;font-size:6.5px;color:#222">Kfz: 2%</div>
<div class="a" style="left:577.9px;top:427.1px;width:60.0px;height:9.5px;background:#fff;border:1px solid #4a4a4a"></div>
<div class="t c" style="left:577.9px;top:427.3px;width:60.0px;font-size:6.5px;color:#222">Mobile/Phone: 2%</div>
<div class="a" style="left:579.1px;top:436.8px;width:90.7px;height:10.0px;background:#fff;border:1px solid #4a4a4a"></div>
<div class="t c" style="left:579.1px;top:437.3px;width:90.7px;font-size:6.5px;color:#222">Aggregated Categories: 1%</div>
<!-- legend -->
<div class="a" style="left:761px;top:200.4px;width:164px;height:250.5px;background:#fdfbf4;border:1px solid #5c5a8c"></div>
<div id="legend"></div>
<div class="a" style="left:765px;top:204.2px;width:7px;height:6.6px;background:#6fd6e0"></div>
<div class="t tx" style="left:773.6px;top:203.5px;font-size:6.4px">Kfz</div>
<div class="a" style="left:765px;top:215.9px;width:7px;height:6.6px;background:#6fd6e0"></div>
<div class="t tx" style="left:773.6px;top:215.2px;font-size:6.4px">Sonstiges</div>
<div class="a" style="left:765px;top:227.6px;width:7px;height:6.6px;background:#9fb0b8"></div>
<div class="t tx" style="left:773.6px;top:226.9px;font-size:6.4px">Miscellaneous</div>
<div class="a" style="left:765px;top:239.2px;width:7px;height:6.6px;background:#c2e08e"></div>
<div class="t tx" style="left:773.6px;top:238.5px;font-size:6.4px">Car</div>
<div class="a" style="left:765px;top:250.9px;width:7px;height:6.6px;background:#a07fc4"></div>
<div class="t tx" style="left:773.6px;top:250.2px;font-size:6.4px">Foodstuff</div>
<div class="a" style="left:765px;top:262.6px;width:7px;height:6.6px;background:#6f8a92"></div>
<div class="t tx" style="left:773.6px;top:261.9px;font-size:6.4px">Household</div>
<div class="a" style="left:765px;top:274.3px;width:7px;height:6.6px;background:#8ee4a0"></div>
<div class="t tx" style="left:773.6px;top:273.6px;font-size:6.4px">Clothing</div>
<div class="a" style="left:765px;top:286.0px;width:7px;height:6.6px;background:#a2f0a2"></div>
<div class="t tx" style="left:773.6px;top:285.3px;font-size:6.4px">Saving</div>
<div class="a" style="left:765px;top:297.6px;width:7px;height:6.6px;background:#90f46e"></div>
<div class="t tx" style="left:773.6px;top:296.9px;font-size:6.4px">Mobile/Phone</div>
<div class="a" style="left:765px;top:309.3px;width:7px;height:6.6px;background:#d0d2aa"></div>
<div class="t tx" style="left:773.6px;top:308.6px;font-size:6.4px">Rental</div>
<div class="a" style="left:765px;top:321.0px;width:7px;height:6.6px;background:#6fd6e0"></div>
<div class="t tx" style="left:773.6px;top:320.3px;font-size:6.4px">Aggregated Categories</div>

<div id="status"></div>
<!-- ===== BOTTOM OPTIONS ===== -->
<div class="a" style="left:129.8px;top:459.7px;width:731.5px;height:66.3px;background:#f6f6f6"></div>
<div class="a" style="left:132.8px;top:462.3px;width:92.6px;height:60.2px;background:#f3f3f3;border:1px solid #e6e6e6"></div>
<div class="a" style="left:140.6px;top:476.2px;width:8px;height:8px;border:1px solid #5a5a5a;border-radius:50%;background:#fff"></div>
<div class="t tx" style="left:152.9px;top:475.8px;font-size:6.5px">Receipts</div>
<div class="a" style="left:140.6px;top:493.9px;width:8px;height:8px;border-radius:50%;background:#0f5ec4"></div>
<div class="a" style="left:143px;top:496.3px;width:3.2px;height:3.2px;border-radius:50%;background:#fff"></div>
<div class="t tx" style="left:152.9px;top:493.7px;font-size:6.5px">Expenditures</div>
<div class="a" style="left:132.8px;top:512.5px;width:92.6px;height:10px;background:#0e79a1"></div>
<div class="t c" style="left:132.8px;top:512.8px;width:92.6px;font-size:6.9px;color:#e8f4f8">Display Values</div>

<div class="a" style="left:231px;top:462.3px;width:107.5px;height:60.2px;background:#f3f3f3;border:1px solid #e6e6e6"></div>
<div class="a chk" style="left:236px;top:467.5px"></div>
<div class="t tx" style="left:247.2px;top:466.8px;font-size:6.9px">Values in %</div>
<div class="a chk" style="left:236px;top:484.9px"></div>
<div class="t tx" style="left:247.2px;top:484px;font-size:6.9px">Display all Values</div>
<div class="a chk" style="left:236px;top:502.2px"></div>
<div class="t tx" style="left:247.2px;top:501.8px;font-size:6.9px">Split sub categories</div>
<div class="a" style="left:231px;top:512.8px;width:107.5px;height:9.5px;background:#0e79a1"></div>
<div class="t c" style="left:231px;top:512.8px;width:107.5px;font-size:6.9px;color:#e8f4f8">Values</div>

<div class="a" style="left:867.5px;top:469.4px;width:64px;height:54.6px;background:#f3f3f3;border:1px solid #e6e6e6"></div>
<div class="a chk" style="left:870px;top:476.3px"></div>
<div class="t tx" style="left:882px;top:475.7px;font-size:6.9px">Title</div>
<div class="a chk" style="left:870px;top:488.6px"></div>
<div class="t tx" style="left:882px;top:487.5px;font-size:6.9px">Y Axis</div>
<div class="a chk" style="left:870px;top:501.2px"></div>
<div class="t tx" style="left:882px;top:500px;font-size:6.9px">X Axis</div>
<div class="a" style="left:867.5px;top:514px;width:64px;height:10px;background:#0e79a1"></div>
<div class="t c" style="left:867.5px;top:514.2px;width:64px;font-size:6.9px;color:#e8f4f8">Description</div>
<div class="a" style="left:867.5px;top:528.8px;width:64px;height:24.5px;background:#f3f3f3;border:1px solid #e6e6e6"></div>
<div class="a chk" style="left:870px;top:533.2px"></div>
<div class="t tx" style="left:882px;top:532px;font-size:6.9px">Legend</div>
<div class="a" style="left:867.5px;top:543.5px;width:64px;height:9.8px;background:#0e79a1"></div>
<div class="t c" style="left:867.5px;top:543.6px;width:64px;font-size:6.9px;color:#e8f4f8">Misc</div>

<!-- bottom tabs -->
<div class="a" style="left:130.5px;top:526.5px;width:573.6px;height:27.5px;background:#efefef"></div>
<div class="a" style="left:610.7px;top:525.9px;width:93.4px;height:29.3px;background:#f9f9f9"></div>
<div class="a" style="left:183.5px;top:528px;width:1px;height:25px;background:#e2e2e2"></div>
<div class="a" style="left:240.4px;top:528px;width:1px;height:25px;background:#e2e2e2"></div>
<div class="a" style="left:323.3px;top:528px;width:1px;height:25px;background:#e2e2e2"></div>
<div class="a" style="left:424px;top:528px;width:1px;height:25px;background:#e2e2e2"></div>
<div class="a" style="left:528px;top:528px;width:1px;height:25px;background:#e2e2e2"></div>
<div class="a" style="left:130.5px;top:553.5px;width:480px;height:1px;background:#e4e4e4"></div>
<svg class="a" style="left:133px;top:536.5px" width="8" height="7" viewBox="0 0 8 7"><path d="M0 2 H2 V7 H0Z M3 3 H5 V7 H3Z M6 0 H8 V7 H6Z" fill="#222"/></svg>
<div class="t tx" style="left:144.7px;top:536px;font-size:6.7px">I/E Barchart</div>
<svg class="a" style="left:187px;top:536.5px" width="8" height="7" viewBox="0 0 8 7"><path d="M0.3 3.5 L2.3 1.5 L5 4.5 L7.7 1.5 M0.3 6 L2.3 4 L5 6.5 L7.7 3.8" stroke="#333" stroke-width="0.9" fill="none"/></svg>
<div class="t tx" style="left:198.7px;top:536px;font-size:6.7px">I/E Linechart</div>
<svg class="a" style="left:243.9px;top:536px" width="7" height="8" viewBox="0 0 7 8"><path d="M0 0 H3 V2 H0Z M0 2.7 H5 V4.7 H0Z M0 5.4 H7 V8 H0Z" fill="#222"/></svg>
<div class="t tx" style="left:254.2px;top:536px;font-size:6.7px">Categories (Barchart)</div>
<svg class="a" style="left:327px;top:536.5px" width="7" height="7" viewBox="0 0 7 7"><path d="M0 3.5 H1.8 V7 H0Z M2.6 2 H4.4 V7 H2.6Z M5.2 0 H7 V7 H5.2Z" fill="#222"/></svg>
<div class="t tx" style="left:338.3px;top:536px;font-size:6.7px">Daily Categories (Barchart)</div>
<svg class="a" style="left:428px;top:536.5px" width="8" height="7" viewBox="0 0 8 7"><path d="M0.3 3.5 L2.3 1.5 L5 4.5 L7.7 1.5 M0.3 6 L2.3 4 L5 6.5 L7.7 3.8" stroke="#333" stroke-width="0.9" fill="none"/></svg>
<div class="t tx" style="left:438.5px;top:536px;font-size:6.7px">Daily Categories (Linechart)</div>
<svg class="a" style="left:530.5px;top:536px" width="9" height="9" viewBox="0 0 9 9"><path d="M4 1 A3.6 3.6 0 1 0 8 5 H4Z" stroke="#222" stroke-width="0.9" fill="none"/><path d="M5.2 0.2 A3.6 3.6 0 0 1 8.8 3.8 H5.2Z" fill="#222"/></svg>
<div class="t tx" style="left:542.1px;top:536px;font-size:6.7px">Categories (Piechart)</div>
<svg class="a" style="left:612px;top:536px" width="11" height="10" viewBox="0 0 11 10"><path d="M0.8 0.8 H10 L6.2 5 V9.3 L4.6 8.4 V5Z" stroke="#222" stroke-width="0.85" fill="none" stroke-linejoin="round"/></svg>
<div class="t tx" style="left:625.3px;top:537px;font-size:6.8px">Categories Funnel Chart</div>

<!-- ===== STATUS BAR ===== -->
<div class="a" style="left:0;top:563px;width:940px;height:2.6px;background:#16708f"></div>
<div class="a" style="left:0;top:565.6px;width:940px;height:14.4px;background:#f1f1f1"></div>
<div class="a" style="left:172.3px;top:565.6px;width:686px;height:14.4px;background:linear-gradient(90deg,#e3e3e3,#ececec)"></div>
<div class="a" style="left:0;top:580px;width:940px;height:2px;background:#16708f"></div>
<div class="a" style="left:858px;top:563px;width:82px;height:19px;background:#16708f"></div>
<div class="a" style="left:861.5px;top:566px;width:75.5px;height:14px;background:#fafafa"></div>
<div class="t tx" style="left:6px;top:569.2px;font-size:6.4px">Status:</div>
<div class="t tx" style="left:42.5px;top:569.2px;font-size:6.6px">OK</div>
<div class="t c tx" style="left:861.5px;top:568.5px;width:75.5px;font-size:6.5px">16.01.2026</div>

</body></html>
